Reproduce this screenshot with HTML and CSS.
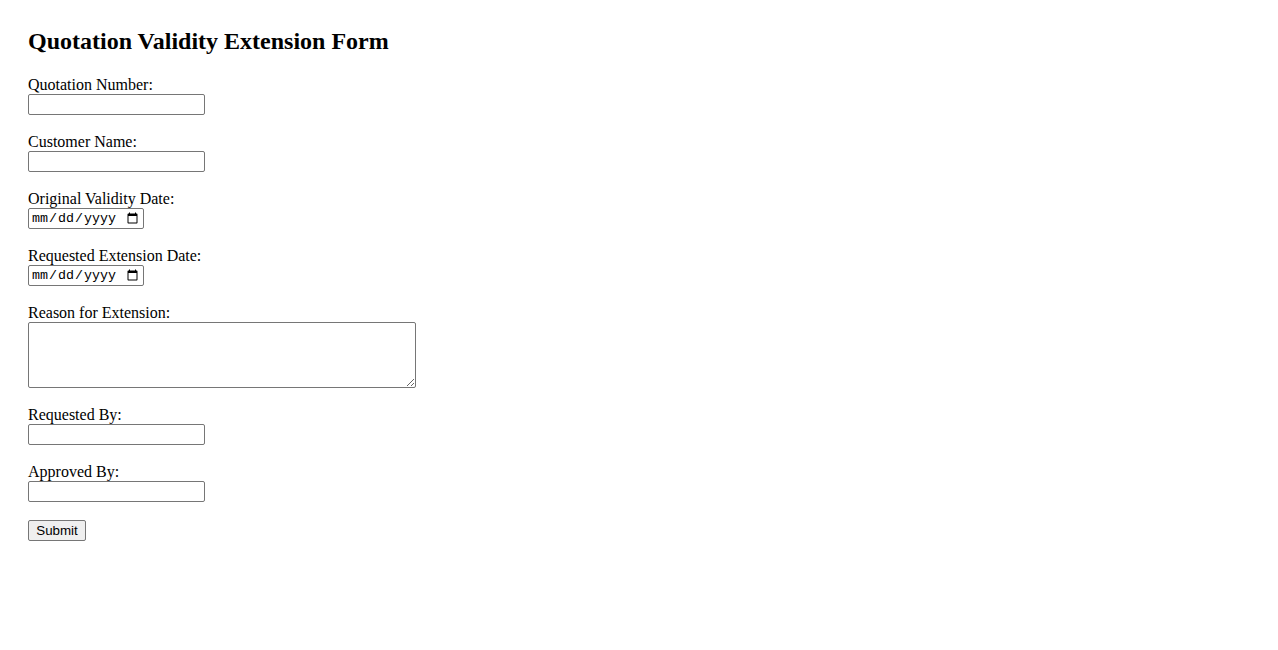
FILE: index.html
```html
<!DOCTYPE html>
<html lang="en">
<head>
    <meta charset="UTF-8">
    <meta name="viewport" content="width=device-width, initial-scale=1.0">
    <title>Quotation Validity Extension Form</title>
    <link rel="stylesheet" href="styles.css">
</head>
<body>
    <h2>Quotation Validity Extension Form</h2>
    <form id="extensionForm">
        <label for="quotationNumber">Quotation Number:</label><br>
        <input type="text" id="quotationNumber" name="quotationNumber" class="textField"><br><br>

        <label for="customerName">Customer Name:</label><br>
        <input type="text" id="customerName" name="customerName" class="textField"><br><br>

        <label for="originalDate">Original Validity Date:</label><br>
        <input type="date" id="originalDate" name="originalDate" class="dateField"><br><br>

        <label for="extensionDate">Requested Extension Date:</label><br>
        <input type="date" id="extensionDate" name="extensionDate" class="dateField"><br><br>

        <label for="reason">Reason for Extension:</label><br>
        <textarea id="reason" name="reason" rows="4" cols="50" class="reasonField"></textarea><br><br>

        <label for="requestedBy">Requested By:</label><br>
        <input type="text" id="requestedBy" name="requestedBy" class="textField"><br><br>

        <label for="approvedBy">Approved By:</label><br>
        <input type="text" id="approvedBy" name="approvedBy" class="textField"><br><br>

        <button type="submit" class="submitButton">Submit</button>
    </form>
</body>
</html>
```

FILE: styles.css
```css
body {
    font-family: "Liberation Serif", "Times New Roman", serif;
    font-size: 16px;
    margin: 8px;
    padding: 20px;
    color: #000;
    background-color: #fff;
}

h2 {
    font-size: 24px;
    margin: 0 0 21px 0;
}

input, textarea, button {
    font-family: "Liberation Sans", Arial, sans-serif;
    font-size: 13.333px;
}

.textField {
    width: 177px;
    height: 21px;
    box-sizing: border-box;
    border: 1px solid #767676;
    border-radius: 2px;
    padding: 1px 2px;
}

.dateField {
    width: 116px;
    height: 21px;
    box-sizing: border-box;
    border: 1px solid #767676;
    border-radius: 2px;
    padding: 1px 2px;
    font-family: "Liberation Mono", "DejaVu Sans Mono", monospace;
}

.reasonField {
    width: 388px;
    height: 66px;
    box-sizing: border-box;
    border: 1px solid #767676;
    border-radius: 2px;
    vertical-align: bottom;
}

.submitButton {
    width: 58px;
    height: 21px;
    box-sizing: border-box;
    padding: 1px 6px;
    border: 1px solid #767676;
    border-radius: 2px;
    background-color: #efefef;
    color: #000;
}
```
